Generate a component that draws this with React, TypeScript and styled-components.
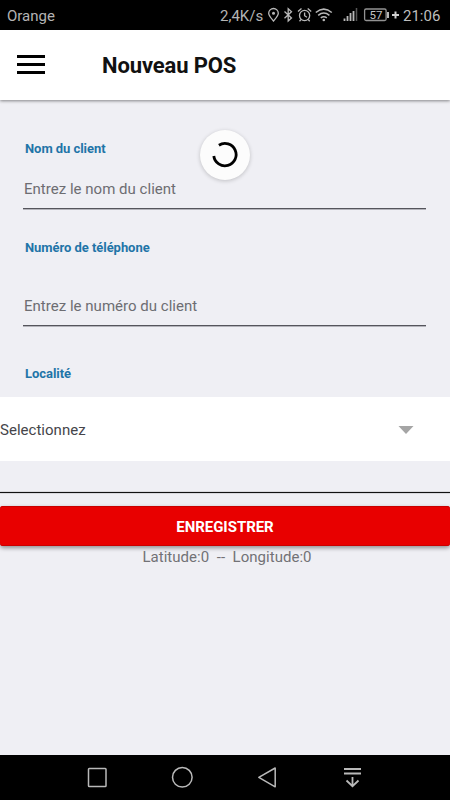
import React from "react";
import styled, { createGlobalStyle } from "styled-components";

const GlobalStyle = createGlobalStyle`
  * { box-sizing: border-box; }
  body { margin: 0; background: #efeff4; font-family: Roboto, "Noto Sans", sans-serif; }
`;

const Screen = styled.div`
  display: flex;
  flex-direction: column;
  width: 450px;
  height: 800px;
  overflow: hidden;
  background: #efeff4;
`;

const StatusBar = styled.div`
  display: flex;
  flex: none;
  align-items: center;
  height: 30px;
  padding: 1px 10px 0 7px;
  background: #000;
  color: #b4b4b4;
  font-size: 15px;
  line-height: 30px;
  white-space: nowrap;
`;

const Carrier = styled.span`
  letter-spacing: 0;
`;

const Speed = styled.span`
  width: 44px;
  margin-left: auto;
`;

const StatusIcons = styled.svg`
  flex: none;
  width: 139px;
  height: 30px;
  margin-top: -1px;
`;

const BatteryText = styled.text`
  font: 11.5px Roboto, sans-serif;
  fill: #c4c4c4;
`;

const Clock = styled.span`
  width: 37px;
  color: #bebebe;
`;

const Header = styled.header`
  display: flex;
  flex: none;
  align-items: center;
  height: 70px;
  padding-left: 17px;
  background: #fff;
  box-shadow: 0 1px 3px rgba(0, 0, 0, 0.45);
  z-index: 1;
`;

const MenuButton = styled.div`
  display: flex;
  flex-direction: column;
  justify-content: space-between;
  width: 28px;
  height: 19px;
  margin-top: -1px;
`;

const MenuBar = styled.span`
  height: 3px;
  background: #000;
`;

const Title = styled.h1`
  margin: 2px 0 0 57px;
  color: #111;
  font-size: 22px;
  font-weight: 700;
  letter-spacing: -0.12px;
  line-height: 28px;
`;

const Content = styled.main`
  position: relative;
  flex: 1;
`;

const Field = styled.div<{ $height: number; $labelTop: number }>`
  display: flex;
  flex-direction: column;
  justify-content: space-between;
  height: ${(p) => p.$height}px;
  margin: 0 24px 0 23px;
  padding-top: ${(p) => p.$labelTop}px;
`;

const Label = styled.label`
  padding-left: 2px;
  color: #1f75a8;
  font-size: 13px;
  font-weight: 700;
  letter-spacing: -0.05px;
  line-height: 16px;
`;

const Placeholder = styled.div`
  height: 31px;
  border-bottom: 1px solid #55555c;
  box-shadow: 0 1px 0 #b4b4bb;
  padding: 1px 0 0 1px;
  color: #6d6d72;
  font-size: 15px;
  letter-spacing: 0.02px;
  line-height: 20px;
`;

const Select = styled.div`
  display: flex;
  align-items: center;
  justify-content: space-between;
  height: 64px;
  padding: 2px 36px 0 0;
  background: #fff;
  color: #45454a;
  font-size: 15px;
  letter-spacing: 0.02px;
`;

const Divider = styled.div`
  height: 1px;
  margin: 31px 0 13px;
  background: #111;
  box-shadow: 0 0 1px #111;
`;

const Submit = styled.button`
  display: block;
  width: 100%;
  height: 40px;
  padding: 2px 0 0;
  border: 0;
  border-radius: 3px;
  background: #e80000;
  box-shadow: 0 2px 4px rgba(0, 0, 0, 0.4), inset 0 1px 0 #c90000, inset 0 -1px 0 #cb0000;
  color: #fff;
  font: 700 15px Roboto, sans-serif;
  letter-spacing: -0.05px;
`;

const Coordinates = styled.div`
  padding: 1px 0 0 4px;
  color: #727276;
  font-size: 15px;
  letter-spacing: 0.03px;
  line-height: 20px;
  text-align: center;
  white-space: pre;
`;

const Loader = styled.div`
  position: absolute;
  top: 30px;
  left: 200px;
  width: 50px;
  height: 50px;
  border-radius: 50%;
  background: #fcfcfc;
  box-shadow: 0 1px 4px rgba(0, 0, 0, 0.2);
`;

const NavBar = styled.nav`
  flex: none;
  height: 45px;
  background: #000;
`;

export default function App() {
  return (
    <>
      <GlobalStyle />
      <Screen>
        <StatusBar>
          <Carrier>Orange</Carrier>
          <Speed>2,4K/s</Speed>
          <StatusIcons viewBox="264 0 139 30" fill="none" stroke="#b8b8b8" strokeWidth="1.3">
            <path d="M273.500 21c-2-2.500-4.800-5-4.800-7.700a4.800 4.800 0 0 1 9.600 0c0 2.700-2.800 5.200-4.800 7.700z" />
            <circle cx="273.500" cy="13.300" r="1.500" fill="#b8b8b8" stroke="none" />
            <path d="M284.500 11.500l7 6.500-3.300 3V8.800l3.300 3-7 6.500" />
            <circle cx="304.600" cy="15.500" r="5.100" />
            <path d="M304.600 12.500v3.200l2.300 1.500M298 11.500l3.500-3M311.200 11.500l-3.500-3M301 19.500l-1.500 1.700M308.200 19.500l1.500 1.700" />
            <path d="M315.800 12.500q8-6.800 16 0M318.200 15.300q5.600-4.500 11.200 0M320.800 17.900q3-2.300 6 0" strokeWidth="1.500" />
            <circle cx="323.800" cy="20" r="1.300" fill="#b8b8b8" stroke="none" />
            <path d="M344.500 21v-2.500M347.500 21v-5M350.500 21v-8M353.500 21V11" strokeWidth="1.800" />
            <path d="M356.500 21V8" stroke="#555" strokeWidth="1.500" />
            <rect x="364.600" y="9" width="21.500" height="11.500" rx="1.500" stroke="#929292" />
            <path d="M388 12v6" strokeWidth="2" />
            <path d="M392 15h7M395.500 11.500v7" stroke="#d0d0d0" strokeWidth="2" />
            <BatteryText x="369.500" y="19" stroke="none">57</BatteryText>
          </StatusIcons>
          <Clock>21:06</Clock>
        </StatusBar>

        <Header>
          <MenuButton>
            <MenuBar />
            <MenuBar />
            <MenuBar />
          </MenuButton>
          <Title>Nouveau POS</Title>
        </Header>

        <Content>
          <Field $height={109} $labelTop={41}>
            <Label>Nom du client</Label>
            <Placeholder>Entrez le nom du client</Placeholder>
          </Field>
          <Field $height={117} $labelTop={31}>
            <Label>Numéro de téléphone</Label>
            <Placeholder>Entrez le numéro du client</Placeholder>
          </Field>
          <Field $height={71} $labelTop={40}>
            <Label>Localité</Label>
          </Field>
          <Select>
            Selectionnez
            <svg width="16" height="8" viewBox="0 0 16 8">
              <path d="M0.500 0h15L8 8z" fill="#a5a5a5" />
            </svg>
          </Select>
          <Divider />
          <Submit>ENREGISTRER</Submit>
          <Coordinates>{"Latitude:0  --  Longitude:0"}</Coordinates>
          <Loader>
            <svg width="50" height="50" viewBox="0 0 50 50" fill="none">
              <path d="M18.900 15.200A11.200 11.200 0 1 1 13.800 26" stroke="#000" strokeWidth="2.800" />
            </svg>
          </Loader>
        </Content>

        <NavBar>
          <svg width="450" height="45" viewBox="0 755 450 45" fill="none" stroke="#b9b9b9" strokeWidth="1.500">
            <rect x="88.500" y="768.500" width="17.500" height="18" rx="0.800" />
            <circle cx="182.300" cy="777.300" r="9.800" />
            <path d="M275.200 768v18.800L258.800 777.400z" strokeLinejoin="round" />
            <path d="M344 769h17M344 773.500h17M352.500 777v9M346.500 780.500l6 5.700 6-5.700" strokeWidth="1.800" />
          </svg>
        </NavBar>
      </Screen>
    </>
  );
}
